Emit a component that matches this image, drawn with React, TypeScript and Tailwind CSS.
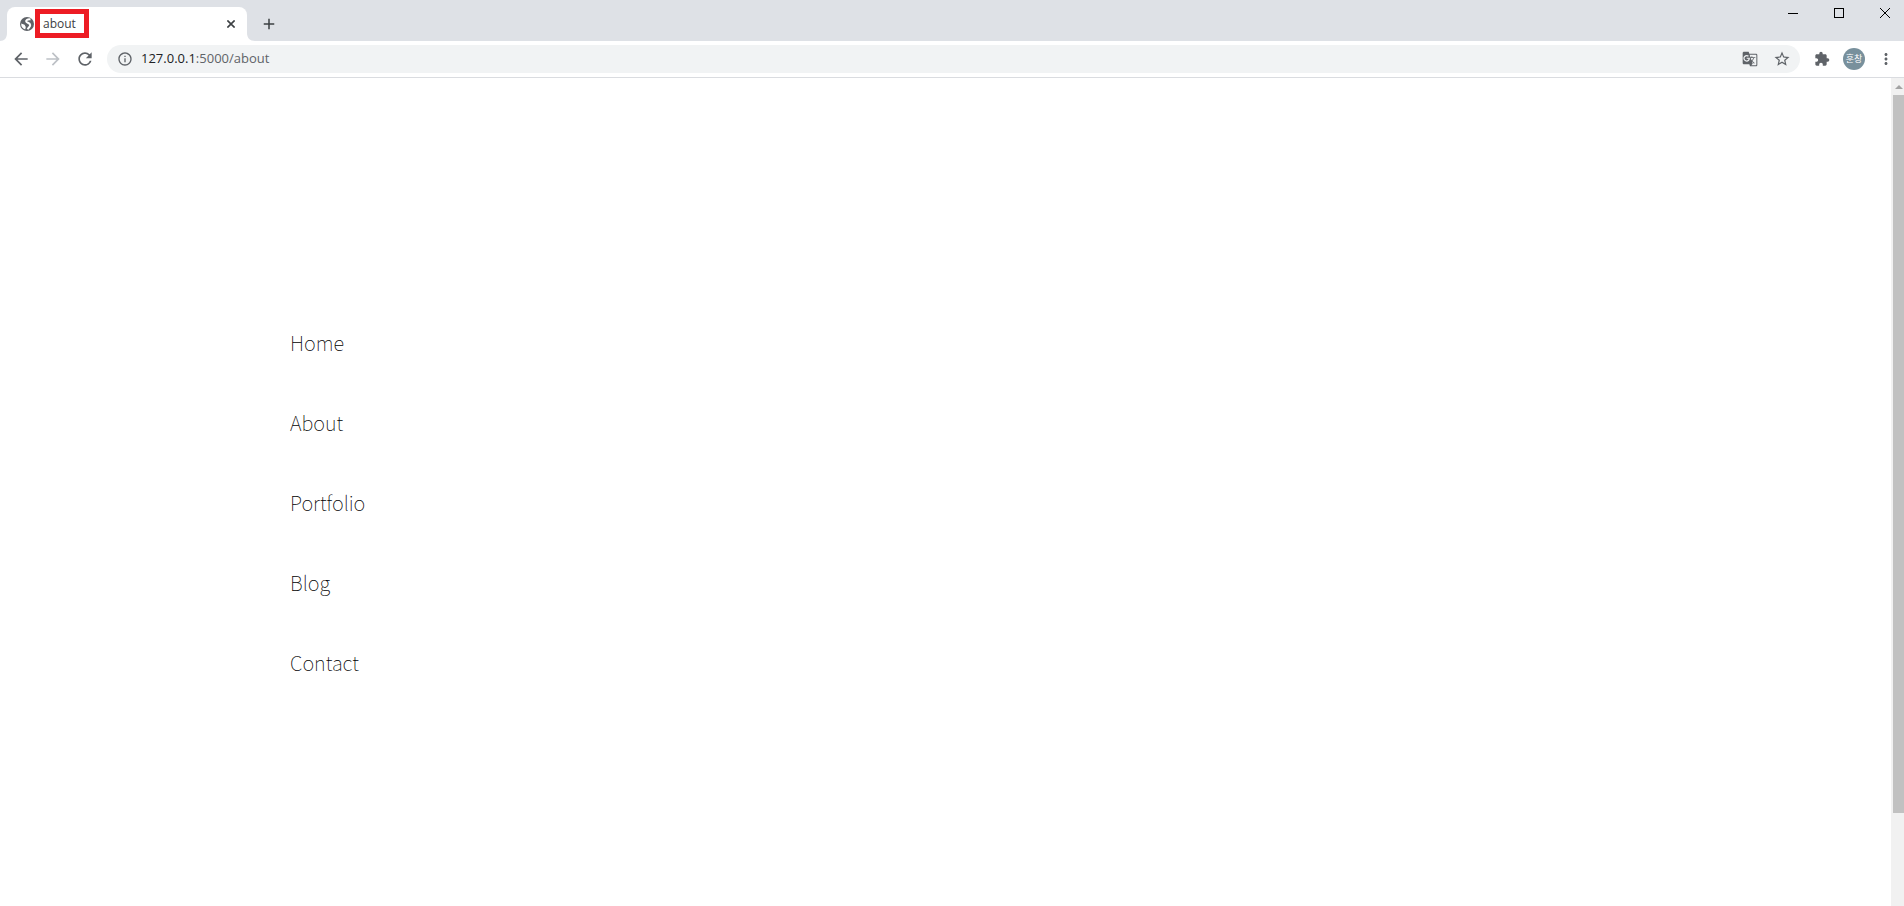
import { useState } from 'react';
import type { ReactNode } from 'react';
import { clsx } from 'clsx';
import {
    MdAdd,
    MdArrowBack,
    MdArrowForward,
    MdExtension,
    MdGTranslate,
    MdInfoOutline,
    MdMoreVert,
    MdRefresh,
    MdStarBorder,
} from 'react-icons/md';

const NAV_ITEMS = [
    { label: 'Home', href: '#home' },
    { label: 'About', href: '#about' },
    { label: 'Portfolio', href: '#portfolio' },
    { label: 'Blog', href: '#blog' },
    { label: 'Contact', href: '#contact' },
];

interface IconButtonProps {
    label: string;
    className?: string;
    children: ReactNode;
}

function IconButton({ label, className, children }: IconButtonProps) {
    return (
        <button
            type="button"
            aria-label={label}
            className={clsx('flex shrink-0 items-center justify-center', className)}
        >
            {children}
        </button>
    );
}

function GlobeIcon() {
    return (
        <svg viewBox="0 0 16 16" className="h-4 w-4">
            <circle cx="8" cy="8" r="7" fill="#5f6368" />
            <path
                fill="none"
                stroke="#fff"
                strokeWidth="2"
                d="M11.500 3.400C8.500 3 6.800 4.200 7.200 5.500c.4 1.400 3.800 1.300 4 3.500.1 1.800-1.700 2.500-2.500 4.300"
            />
            <path fill="#fff" d="M2.200 7.600l3.400 1.200 1.200 2.200-.6 2.600a6 6 0 0 1-4-6z" />
        </svg>
    );
}

function TabStrip() {
    return (
        <div className="flex h-[41px] items-start bg-[#dee1e6]">
            {/* active tab with its flared bottom corners */}
            <div className="flex items-end self-end">
                <svg viewBox="0 0 7 8" className="h-2 w-[7px] text-white" fill="currentColor">
                    <path d="M7 0v8H0c4.500 0 7-3 7-8z" />
                </svg>
                <div className="relative flex h-[34px] w-60 items-center rounded-t-lg bg-white pr-2 pl-3">
                    <GlobeIcon />
                    <span className="ml-2 flex-1 text-xs text-[#3c4043]">about</span>
                    <IconButton label="Close tab" className="h-4 w-4 text-[#3c4043]">
                        <svg viewBox="0 0 8 8" className="h-2 w-2" stroke="currentColor" strokeWidth="1.6">
                            <path d="M.4.4l7.200 7.200M7.600.4L.4 7.600" />
                        </svg>
                    </IconButton>
                    <span className="absolute top-[2px] left-7 h-[29px] w-[54px] border-5 border-[#ed1c24]" />
                </div>
                <svg viewBox="0 0 8 8" className="h-2 w-2 text-white" fill="currentColor">
                    <path d="M0 0v8h8c-5 0-8-3-8-8z" />
                </svg>
            </div>
            <IconButton label="New tab" className="mt-2.5 h-7 w-7 text-[#3c4043]">
                <MdAdd className="h-[18px] w-[18px]" />
            </IconButton>
            <div className="ml-auto flex text-black">
                <IconButton label="Minimize" className="h-[26px] w-[46px]">
                    <svg viewBox="0 0 10 10" className="h-2.5 w-2.5" shapeRendering="crispEdges">
                        <path d="M0 5.500h10" stroke="currentColor" />
                    </svg>
                </IconButton>
                <IconButton label="Maximize" className="h-[26px] w-[46px]">
                    <svg viewBox="0 0 10 10" className="h-2.5 w-2.5" fill="none" shapeRendering="crispEdges">
                        <path d="M.5.5h9v9h-9z" stroke="currentColor" />
                    </svg>
                </IconButton>
                <IconButton label="Close" className="h-[26px] w-[42px] pl-1">
                    <svg viewBox="0 0 10 10" className="h-2.5 w-2.5" fill="none">
                        <path d="M0 0l10 10M10 0L0 10" stroke="currentColor" />
                    </svg>
                </IconButton>
            </div>
        </div>
    );
}

function AddressBar() {
    const [url, setUrl] = useState('127.0.0.1:5000/about');
    const colon = url.indexOf(':');
    const host = colon < 0 ? url : url.slice(0, colon);
    const rest = colon < 0 ? '' : url.slice(colon);

    return (
        <div className="ml-1.5 flex h-7 flex-1 items-center rounded-full bg-[#f1f3f4] pr-2 pl-2.5 text-[#5f6368]">
            <MdInfoOutline className="h-4 w-4 shrink-0" />
            {/* the input's own text is transparent, the two-tone copy shows through it */}
            <div className="relative ml-2 flex flex-1 items-center text-[13px]">
                <span aria-hidden="true" className="whitespace-pre">
                    <span className="text-[#202124]">{host}</span>
                    {rest}
                </span>
                <input
                    type="text"
                    aria-label="Address and search bar"
                    value={url}
                    onChange={(e) => setUrl(e.target.value)}
                    className="absolute inset-0 w-full bg-transparent text-transparent caret-black outline-none"
                />
            </div>
            <IconButton label="Translate this page" className="h-5 w-5">
                <MdGTranslate className="h-4 w-4" />
            </IconButton>
            <IconButton label="Bookmark this tab" className="ml-3 h-5 w-5">
                <MdStarBorder className="h-[18px] w-[18px]" />
            </IconButton>
        </div>
    );
}

function Toolbar() {
    return (
        <div className="flex h-[37px] items-center border-b border-[#dadce0] pl-[5px] text-[#5f6368]">
            <IconButton label="Back" className="h-8 w-8">
                <MdArrowBack className="h-5 w-5" />
            </IconButton>
            <IconButton label="Forward" className="h-8 w-8 text-[#bdc1c6]">
                <MdArrowForward className="h-5 w-5" />
            </IconButton>
            <IconButton label="Reload" className="h-8 w-8">
                <MdRefresh className="h-5 w-5" />
            </IconButton>
            <AddressBar />
            <IconButton label="Extensions" className="ml-1.5 h-8 w-8">
                <MdExtension className="h-4 w-4" />
            </IconButton>
            <IconButton label="Profile" className="h-8 w-8">
                <span className="flex h-[22px] w-[22px] items-center justify-center rounded-full bg-[#78909c] font-['Noto_Sans_CJK_KR',sans-serif] text-[9px] text-white">
                    훈창
                </span>
            </IconButton>
            <IconButton label="Menu" className="mr-0.5 h-8 w-8">
                <MdMoreVert className="h-[18px] w-[18px]" />
            </IconButton>
        </div>
    );
}

function Scrollbar() {
    return (
        <div className="flex w-[13px] flex-col bg-[#f1f1f1] pb-[93px] pl-0.5">
            <div className="flex h-[17px] items-center justify-center">
                <svg viewBox="0 0 8 4" className="h-1 w-2" fill="#a3a3a3">
                    <path d="M4 0l4 4H0z" />
                </svg>
            </div>
            <div className="flex-1 bg-[#c1c1c1]" />
        </div>
    );
}

export default function App() {
    return (
        <div className="flex h-screen flex-col overflow-hidden bg-white font-['Open_Sans',sans-serif]">
            <TabStrip />
            <Toolbar />
            <div className="flex flex-1">
                <nav className="flex-1 pt-[225px] pl-[290px]">
                    <ul>
                        {NAV_ITEMS.map((item) => (
                            <li key={item.label} className="flex h-20 items-center">
                                <a
                                    href={item.href}
                                    className="font-['Noto_Sans_CJK_KR',sans-serif] text-xl font-thin text-black"
                                >
                                    {item.label}
                                </a>
                            </li>
                        ))}
                    </ul>
                </nav>
                <Scrollbar />
            </div>
        </div>
    );
}
